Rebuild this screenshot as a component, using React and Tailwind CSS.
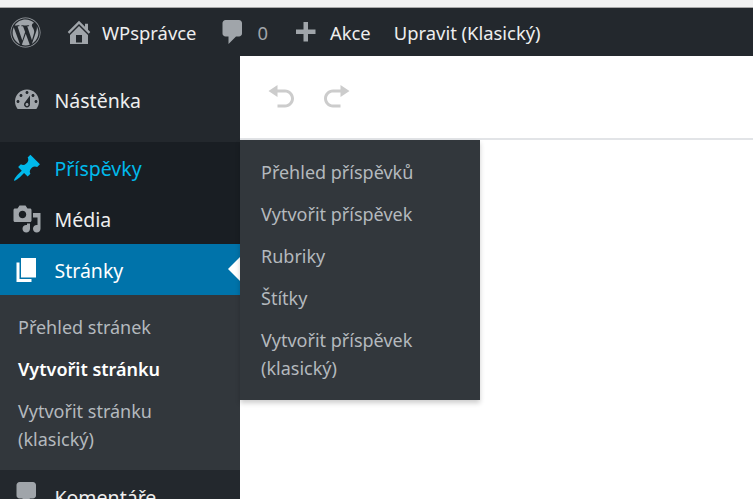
import React from "react";
import { FaWordpress } from "react-icons/fa";

const paths = {
  home: "M16 8.5l1.53 1.53-1.06 1.06L10 4.62l-6.47 6.47-1.06-1.06L10 2.5l4 4v-2h2v4zm-6-2.46l6 5.99V18H4v-5.97zM12 17v-5H8v5h4z",
  comment: "M5 2h9q.82 0 1.41.59T16 4v7q0 .82-.59 1.41T14 13h-2l-5 5v-5H5q-.82 0-1.41-.59T3 11V4q0-.82.59-1.41T5 2z",
  plus: "M17 7v3h-5v5H9v-5H4V7h5V2h3v5h5z",
  pin: "M10.44 3.02l1.82-1.82 6.36 6.35-1.83 1.82c-1.05-.68-2.48-.57-3.41.36l-.75.75c-.92.93-1.04 2.35-.35 3.41l-1.83 1.82-2.41-2.41-2.8 2.79c-.42.42-3.38 2.71-3.8 2.29s1.86-3.39 2.28-3.81l2.79-2.79L4.1 9.36l1.83-1.82c1.05.69 2.48.57 3.4-.36l.75-.75c.93-.92 1.05-2.35.36-3.41z",
  media: "M13 11V4c0-.55-.45-1-1-1h-1.67L9 1H5L3.67 3H2c-.55 0-1 .45-1 1v7c0 .55.45 1 1 1h10c.55 0 1-.45 1-1zM7 4.5c1.38 0 2.5 1.12 2.5 2.5S8.38 9.5 7 9.5 4.5 8.38 4.5 7 5.62 4.5 7 4.5zM14 6h5v10.5c0 1.38-1.12 2.5-2.5 2.5S14 17.88 14 16.5s1.12-2.5 2.5-2.5c.17 0 .34.02.5.05V9h-3V6zm-4 8.05V13h2v3.5c0 1.38-1.12 2.5-2.5 2.5S7 17.88 7 16.5 8.12 14 9.5 14c.17 0 .34.02.5.05z",
  page: "M6 15V2h10v13H6zm-1 1h8v2H3V5h2v11z",
  dash: "M3.76 16h12.48c1.1-1.37 1.76-3.11 1.76-5 0-4.42-3.58-8-8-8s-8 3.58-8 8c0 1.89.66 3.63 1.76 5zM10 4c.55 0 1 .45 1 1s-.45 1-1 1-1-.45-1-1 .45-1 1-1zM6 6c.55 0 1 .45 1 1s-.45 1-1 1-1-.45-1-1 .45-1 1-1zm8 0c.55 0 1 .45 1 1s-.45 1-1 1-1-.45-1-1 .45-1 1-1zm-5.37 5.55L12 7v6c0 1.1-.9 2-2 2s-2-.9-2-2c0-.57.24-1.08.63-1.45zM4 10c.55 0 1 .45 1 1s-.45 1-1 1-1-.45-1-1 .45-1 1-1zm12 0c.55 0 1 .45 1 1s-.45 1-1 1-1-.45-1-1 .45-1 1-1zm-5 3c0-.55-.45-1-1-1s-1 .45-1 1 .45 1 1 1 1-.45 1-1z",
  undo: "M12 5H7V2L1 6l6 4V7h5c2.2 0 4 1.8 4 4s-1.8 4-4 4H7v2h5c3.3 0 6-2.7 6-6s-2.7-6-6-6z",
  redo: "M8 5h5V2l6 4-6 4V7H8c-2.2 0-4 1.8-4 4s1.8 4 4 4h5v2H8c-3.3 0-6-2.7-6-6s2.7-6 6-6z",
};

const Icon = ({ d, className }) => (
  <svg viewBox="0 0 20 20" fill="currentColor" className={className}>
    <path d={paths[d]} />
  </svg>
);

const MenuRow = ({ icon, label, className = "", iconClass = "text-[#a0a5aa]" }) => (
  <div className={`flex items-center h-full pl-3 ${className}`}>
    <Icon d={icon} className={`w-[30px] h-[30px] shrink-0 ${iconClass}`} />
    <span className="ml-[12.5px] mt-[2px]">{label}</span>
  </div>
);

export default function App() {
  return (
    <div className="relative w-[753px] h-[499px] overflow-hidden bg-white text-[19.5px] font-['Noto_Sans','Open_Sans',sans-serif]">
      <div className="h-[8px] bg-[#f1f1f1] border-b border-[#a8a8a8]" />
      <header className="flex items-center h-[48px] bg-[#23282d] text-[#eeeeee] text-[18.4px] whitespace-nowrap">
        <FaWordpress className="ml-[10px] w-[31px] h-[31px] text-[#a0a5aa]" />
        <Icon d="home" className="ml-[23px] w-[30px] h-[30px] text-[#a0a5aa]" />
        <span className="ml-[8px] mt-[1px]">WPsprávce</span>
        <Icon d="comment" className="ml-[22px] w-[30px] h-[30px] text-[#a0a5aa]" />
        <span className="ml-[9px] mt-[1px] text-[#a0a5aa]">0</span>
        <Icon d="plus" className="ml-[22px] mt-[3px] w-[30px] h-[30px] text-[#a0a5aa]" />
        <span className="ml-[10px] mt-[1px]">Akce</span>
        <span className="ml-[23px] mt-[1px]">Upravit (Klasický)</span>
      </header>
      <div className="flex h-[443px]">
        <aside className="w-[240px] shrink-0 bg-[#23282d] text-[#eeeeee] flex flex-col overflow-hidden">
          <div className="h-[86px] shrink-0 pt-[1px]">
            <MenuRow icon="dash" label="Nástěnka" />
          </div>
          <div className="h-[52px] shrink-0 bg-[#191e23]">
            <MenuRow icon="pin" label="Příspěvky" className="text-[#00b9eb]" iconClass="text-[#00b9eb]" />
          </div>
          <div className="h-[50px] shrink-0 bg-[#191e23]">
            <MenuRow icon="media" label="Média" />
          </div>
          <div className="relative h-[51px] shrink-0 bg-[#0073aa] text-white">
            <MenuRow icon="page" label="Stránky" iconClass="text-white" />
            <div className="absolute right-0 top-[13px] w-0 h-0 border-y-[12px] border-y-transparent border-r-[12px] border-r-white" />
          </div>
          <div className="h-[175px] shrink-0 bg-[#32373c] pl-[18px] pt-[18px] text-[18px] leading-[28px] text-[#b4b9be]">
            <div>Přehled stránek</div>
            <div className="mt-[14px] font-semibold text-white">Vytvořit stránku</div>
            <div className="mt-[14px]">Vytvořit stránku<br />(klasický)</div>
          </div>
          <div className="flex items-start pl-3 pt-[9px] flex-1">
            <Icon d="comment" className="w-[30px] h-[30px] shrink-0 text-[#a0a5aa]" />
            <span className="ml-[12.5px] mt-[4px]">Komentáře</span>
          </div>
        </aside>
        <main className="flex-1 min-w-0">
          <div className="flex items-center h-[84px] border-b-2 border-[#e2e4e7] pl-[27px] gap-[24px] text-[#cccccc]">
            <Icon d="undo" className="w-[30px] h-[30px]" />
            <Icon d="redo" className="w-[30px] h-[30px]" />
          </div>
        </main>
      </div>
      <div className="absolute left-[240px] top-[140px] w-[240px] h-[260px] bg-[#32373c] shadow-[0_3px_5px_rgba(0,0,0,0.2)] pl-[21px] pt-[18px] text-[18px] leading-[28px] text-[#b4b9be]">
        <div>Přehled příspěvků</div>
        <div className="mt-[14px]">Vytvořit příspěvek</div>
        <div className="mt-[14px]">Rubriky</div>
        <div className="mt-[14px]">Štítky</div>
        <div className="mt-[14px]">Vytvořit příspěvek<br />(klasický)</div>
      </div>
    </div>
  );
}
